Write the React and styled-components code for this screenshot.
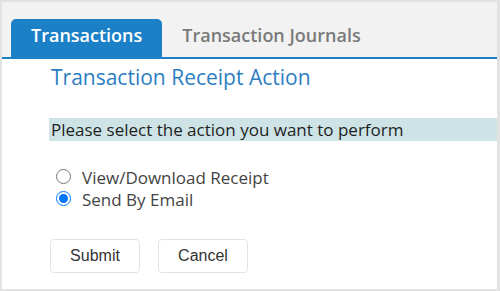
import React from 'react';
import styled, { createGlobalStyle } from 'styled-components';

const GlobalStyle = createGlobalStyle`
  html, body {
    margin: 0;
    padding: 0;
    background: #ffffff;
  }
`;

const Frame = styled.div`
  width: 500px;
  height: 291px;
  box-sizing: border-box;
  border: 2px solid #e2e2e2;
  border-right-width: 3px;
  background: #ffffff;
  font-family: 'Open Sans', 'Noto Sans', sans-serif;
  overflow: hidden;
`;

const TabBar = styled.div`
  display: flex;
  background: #f2f2f2;
  padding: 17px 0 0 9px;
  border-bottom: 2px solid #1b80c6;
`;

const Tab = styled.div`
  height: 33px;
  line-height: 33px;
  padding: 0 20px 5px;
  font-size: 18px;
  font-weight: 600;
  border-radius: 5px 5px 0 0;
  color: ${(p) => (p.active ? '#ffffff' : '#7a7a7a')};
  background: ${(p) => (p.active ? '#1b80c6' : 'transparent')};
  cursor: pointer;
`;

const Content = styled.div`
  padding-left: 47px;
`;

const Heading = styled.h2`
  margin: 4px 0 0 2px;
  font-size: 21px;
  line-height: 28px;
  font-weight: 400;
  color: #2c7ec2;
`;

const Prompt = styled.div`
  margin-top: 27px;
  height: 23px;
  line-height: 23px;
  padding-left: 2px;
  background: #cde3e6;
  font-size: 17px;
  color: #1f1f1f;
`;

const Options = styled.div`
  margin-top: 26px;
  display: flex;
  flex-direction: column;
`;

const Option = styled.label`
  display: flex;
  align-items: center;
  height: 22px;
  line-height: 22px;
  font-size: 17px;
  color: #444444;
  cursor: pointer;
`;

const Radio = styled.input`
  width: 15px;
  height: 15px;
  margin: 0 11px 3px 7px;
`;

const Actions = styled.div`
  display: flex;
  gap: 18px;
  margin: 28px 0 0 1px;
`;

const Button = styled.button`
  width: 90px;
  height: 34px;
  box-sizing: border-box;
  border: 1px solid #e3e3e3;
  border-radius: 4px;
  background: #ffffff;
  font-family: 'Liberation Sans', Arial, sans-serif;
  font-size: 16px;
  color: #333333;
  cursor: pointer;
`;

export default function App() {
  const [action, setAction] = React.useState('email');
  return (
    <>
      <GlobalStyle />
      <Frame>
        <TabBar>
          <Tab active>Transactions</Tab>
          <Tab>Transaction Journals</Tab>
        </TabBar>
        <Content>
          <Heading>Transaction Receipt Action</Heading>
          <Prompt>Please select the action you want to perform</Prompt>
          <Options>
            <Option>
              <Radio
                type="radio"
                name="action"
                checked={action === 'download'}
                onChange={() => setAction('download')}
              />
              View/Download Receipt
            </Option>
            <Option>
              <Radio
                type="radio"
                name="action"
                checked={action === 'email'}
                onChange={() => setAction('email')}
              />
              Send By Email
            </Option>
          </Options>
          <Actions>
            <Button>Submit</Button>
            <Button>Cancel</Button>
          </Actions>
        </Content>
      </Frame>
    </>
  );
}
